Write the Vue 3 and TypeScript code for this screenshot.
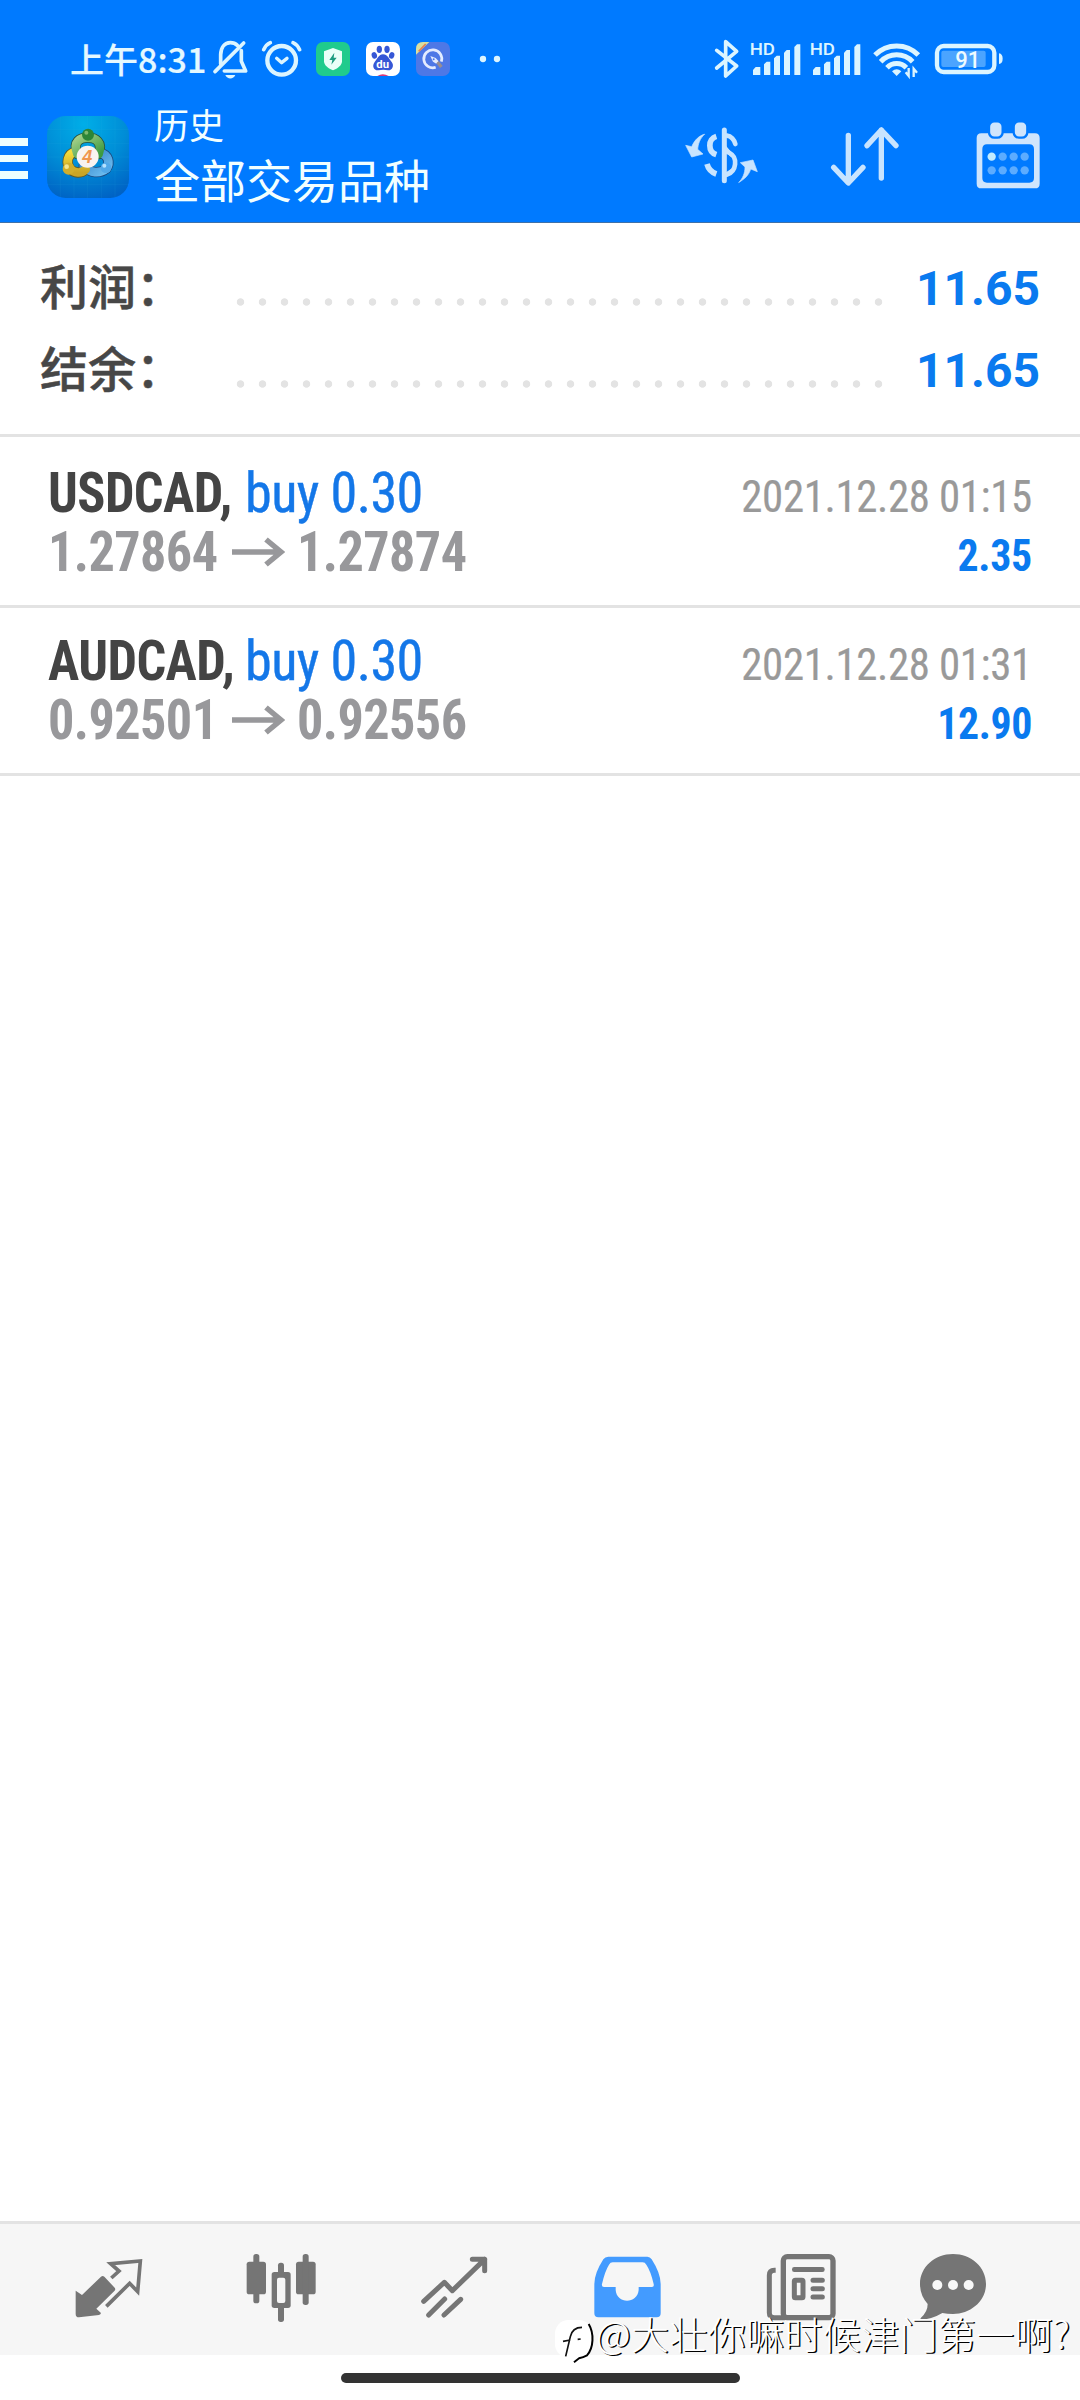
<script setup lang="ts">
interface Deal {
  symbol: string
  side: string
  open: string
  close: string
  time: string
  profit: string
}

const totals: { label: string; value: string }[] = [
  { label: '利润：', value: '11.65' },
  { label: '结余：', value: '11.65' },
]

const deals: Deal[] = [
  { symbol: 'USDCAD,', side: 'buy 0.30', open: '1.27864', close: '1.27874', time: '2021.12.28 01:15', profit: '2.35' },
  { symbol: 'AUDCAD,', side: 'buy 0.30', open: '0.92501', close: '0.92556', time: '2021.12.28 01:31', profit: '12.90' },
]

const signalBars: string[] = [
  'M250 165V150L258 141H272V165Z',
  'M283 165V133L291 125H302V165Z',
  'M313 165V115L321 107H331V165Z',
  'M343 165V98L351 90H361V165Z',
  'M374 165V81L382 73H392V165Z',
]
const calendarDots: number[] = [966, 999, 1032, 1065]
</script>

<template>
  <div class="screen">
    <header class="header">
      <div class="status">
        <div class="clock">上午8:31</div>
        <!-- muted, alarm and notification icons -->
        <svg class="status-left" viewBox="0 0 900 180" width="300" height="60">
          <g transform="translate(-630 0)" fill="none" stroke="#dcf5ff" stroke-width="11" stroke-linecap="round" stroke-linejoin="round">
            <path d="M662 132V104C663 82 674 68 691 68C700 68 707 71 712 76M724 92V124L737 153H673" />
            <path d="M645 155L731 69" />
            <path d="M676 165H706C701 179 681 179 676 165Z" fill="#dcf5ff" stroke="none" />
          </g>
          <g transform="translate(150 0)" fill="none" stroke="#dcf5ff" stroke-width="13" stroke-linecap="round" stroke-linejoin="round">
            <circle cx="65" cy="121" r="43" />
            <path d="M50 115L65 128L81 115" stroke-width="10" />
            <path d="M11 89Q18 74 31 68M99 68Q112 74 119 89" stroke-width="11" />
          </g>
          <g transform="translate(150 0)">
            <rect x="168" y="66" width="102" height="102" rx="21" fill="#20cb8d" />
            <path d="M219 84L246 94V124C246 136 233 146 219 151C205 146 192 136 192 124V94Z" fill="#e9fff8" />
            <path d="M223 98L208 120H217L214 134L230 113H221Z" fill="#1c9c80" />
            <rect x="318" y="66" width="102" height="102" rx="21" fill="#fff" />
            <g fill="#3657d6">
              <ellipse cx="358" cy="88" rx="8" ry="11" />
              <ellipse cx="381" cy="88" rx="8" ry="11" />
              <ellipse cx="343" cy="106" rx="8" ry="10" transform="rotate(-18 343 106)" />
              <ellipse cx="395" cy="106" rx="8" ry="10" transform="rotate(18 395 106)" />
              <path d="M369 103C383 103 387 118 395 126C404 137 396 152 384 151C374 149 366 149 355 151C341 152 335 138 344 126C352 118 356 103 369 103Z" />
            </g>
            <text x="368" y="144" font-size="34" font-weight="700" text-anchor="middle" fill="#fff" font-family="Roboto, sans-serif">du</text>
            <path d="M352 168Q368 158 386 168Z" fill="#d9367c" />
            <rect x="468" y="66" width="102" height="102" rx="21" fill="#4e78e6" />
            <path d="M468 104V87Q468 66 489 66H508Z" fill="#d9dfa0" />
            <path d="M476 94L497 72" stroke="#e98050" stroke-width="5" />
            <path d="M527 142A27 27 0 1 1 544 125" fill="none" stroke="#e4ecff" stroke-width="8" />
            <path d="M511 108L527 114L536 124L529 131L519 125Z" fill="#e4ecff" />
            <circle cx="521" cy="118" r="3" fill="#4e78e6" />
            <path d="M529 130L536 123L548 138L540 144Z" fill="#998e91" />
            <circle cx="669" cy="117" r="9.500" fill="#dcf5ff" />
            <circle cx="711" cy="117" r="9.500" fill="#dcf5ff" />
          </g>
        </svg>
        <!-- bluetooth, two SIM signals, wifi, battery -->
        <svg class="status-right" viewBox="130 0 870 180" width="290" height="60">
          <path d="M141 91L201 138L168 168V65L201 94L141 144" fill="none" stroke="#dcf5ff" stroke-width="11" stroke-linecap="round" stroke-linejoin="round" />
          <g v-for="n in 2" :key="n" :transform="`translate(${(n - 1) * 180} 0)`" fill="#dcf5ff">
            <text x="240" y="105" font-size="49" font-weight="500" textLength="76" lengthAdjust="spacingAndGlyphs" font-family="Roboto, sans-serif">HD</text>
            <path v-for="bar in signalBars" :key="bar" :d="bar" />
          </g>
          <g fill="none" stroke="#dcf5ff" stroke-width="15">
            <path d="M616 105A91 91 0 0 1 746 105" />
            <path d="M633 125A66 66 0 0 1 729 125" />
            <path d="M652 143A40 40 0 0 1 710 143" />
          </g>
          <path d="M667 154Q681 142 695 154L681 168Z" fill="#dcf5ff" />
          <path d="M708 157L717 168V144M742 158L732 146V171" fill="none" stroke="#dcf5ff" stroke-width="7" />
          <rect x="802" y="78" width="172" height="78" rx="20" fill="none" stroke="#dcf5ff" stroke-width="13" />
          <rect x="815" y="92" width="133" height="49" rx="6" fill="#4ba4ff" />
          <text x="857" y="144" font-size="70" font-weight="500" textLength="75" lengthAdjust="spacingAndGlyphs" fill="#effbff" font-family="Roboto, sans-serif">91</text>
          <path d="M988 100Q999 102 999 116Q999 130 988 132Z" fill="#dcf5ff" />
        </svg>
      </div>
      <div class="toolbar">
        <div class="menu"><i></i><i></i><i></i></div>
        <svg class="logo" viewBox="142 288 246 246" width="82" height="82">
          <defs>
            <radialGradient id="tile" cx="45%" cy="10%" r="95%">
              <stop offset="0" stop-color="#00aee8" />
              <stop offset="0.55" stop-color="#008cd6" />
              <stop offset="1" stop-color="#0062c4" />
            </radialGradient>
            <linearGradient id="green" x1="0" y1="0" x2="1" y2="1"><stop offset="0" stop-color="#a5d08a" /><stop offset="1" stop-color="#3c9a40" /></linearGradient>
            <linearGradient id="gold" x1="0" y1="0" x2="0" y2="1"><stop offset="0" stop-color="#f4dc3a" /><stop offset="1" stop-color="#c9a526" /></linearGradient>
            <linearGradient id="blue" x1="0" y1="0" x2="1" y2="1"><stop offset="0" stop-color="#2f7fc4" /><stop offset="1" stop-color="#6dbdf0" /></linearGradient>
          </defs>
          <rect x="142" y="288" width="246" height="246" rx="56" fill="url(#tile)" />
          <path d="M182 290V532M223 288V534M264 288V534M305 288V534M346 290V532M142 329H388M142 370H388M142 411H388M142 452H388M142 493H388" stroke="#31b5df" stroke-opacity=".15" stroke-width="2" />
          <g fill="none" stroke-linecap="round" stroke-linejoin="round">
            <g stroke="#28503e" stroke-width="31">
              <path d="M300 398C328 404 332 430 320 446C300 462 272 460 252 438" stroke="#1c4a80" />
              <path d="M226 396C202 402 199 430 211 446C224 460 245 462 258 448" stroke="#5f5a28" />
              <path d="M233 402C218 364 242 353 264 353C288 353 310 366 297 402" />
            </g>
            <g stroke-width="26">
              <path d="M300 398C328 404 332 430 320 446C300 462 272 460 252 438" stroke="url(#blue)" />
              <path d="M226 396C202 402 199 430 211 446C224 460 245 462 258 448" stroke="url(#gold)" />
              <path d="M233 402C218 364 242 353 264 353C288 353 310 366 297 402" stroke="url(#green)" />
            </g>
          </g>
          <circle cx="265" cy="344" r="18" fill="#2c8637" />
          <circle cx="207" cy="446" r="18" fill="#cfae2c" />
          <circle cx="319" cy="443" r="16" fill="#51a8e8" />
          <circle cx="260" cy="338" r="6" fill="#7fb96e" />
          <circle cx="201" cy="440" r="7" fill="#f4e690" />
          <circle cx="314" cy="437" r="6" fill="#b4e2ff" />
          <circle cx="264" cy="410" r="33" fill="#f8f3f0" />
          <text x="263" y="429" font-size="54" font-style="italic" font-weight="700" text-anchor="middle" fill="#f0964e" font-family="'Liberation Sans', sans-serif">4</text>
        </svg>
        <div class="titles">
          <div class="title">历史</div>
          <div class="subtitle">全部交易品种</div>
        </div>
        <svg class="tools" viewBox="40 300 1080 216" width="360" height="72" fill="none" stroke="#c8e4ff" stroke-linecap="round" stroke-linejoin="round">
          <!-- currency -->
          <g stroke-width="15">
            <path d="M164 330V482" />
            <path d="M140 349C114 357 114 395 140 404M112 432C116 447 126 457 140 462" stroke-linecap="butt" stroke-width="17" />
            <path d="M172 347C184 348 194 360 197 372M170 394L180 399C205 412 201 454 172 464" stroke-width="14" />
            <path d="M164 380L185 405M170 463L186 452" stroke-width="11" />
            <path d="M104 343C89 347 76 358 66 380L48 376L66 411L100 402L84 388C86 370 90 358 104 343Z" fill="#c8e4ff" stroke-width="2" />
            <path d="M208 487C223 478 238 466 243 447L263 455L250 420L212 428L226 441C226 460 219 475 208 487Z" fill="#c8e4ff" stroke-width="2" />
          </g>
          <!-- sort -->
          <path d="M536 346V488M492 442L536 489L580 442M635 474V330M592 377L635 330L679 377" stroke-width="16" />
          <!-- calendar -->
          <path d="M935 340H1096Q1110 340 1110 354V491Q1110 505 1096 505H935Q921 505 921 491V354Q921 340 935 340ZM952 373Q938 373 938 387V474Q938 488 952 488H1079Q1093 488 1093 474V387Q1093 373 1079 373Z" fill="#cfe5fc" fill-rule="evenodd" stroke="none" />
          <g fill="#cfe5fc" stroke="#007aff" stroke-width="7">
            <rect x="958" y="304" width="41" height="49" rx="16" />
            <rect x="1032" y="304" width="41" height="49" rx="16" />
          </g>
          <g stroke="none">
            <circle v-for="(x, i) in calendarDots" :key="x" :cx="x" cy="410" r="12.500" :fill="i ? '#5cacff' : '#c2ecff'" />
            <circle v-for="x in calendarDots" :key="x" :cx="x" cy="451" r="12.500" fill="#5cacff" />
          </g>
        </svg>
      </div>
    </header>

    <section class="totals">
      <div v-for="row in totals" :key="row.label" class="total">
        <span class="label">{{ row.label }}</span>
        <span class="leader"></span>
        <span class="amount">{{ row.value }}</span>
      </div>
    </section>

    <main class="deals">
      <article v-for="deal in deals" :key="deal.symbol" class="deal">
        <div class="line">
          <b class="symbol">{{ deal.symbol }}</b>
          <span class="side">{{ deal.side }}</span>
          <span class="time">{{ deal.time }}</span>
        </div>
        <div class="line">
          <b class="price">{{ deal.open }}</b>
          <svg class="arrow" width="53" height="30" viewBox="0 0 53 30" fill="none" stroke="#98989b" stroke-width="5.500"><path d="M0 15H49M34 2.500L49 15L34 27.500" /></svg>
          <b class="price">{{ deal.close }}</b>
          <b class="profit">{{ deal.profit }}</b>
        </div>
      </article>
    </main>

    <nav class="tabs">
      <svg viewBox="0 0 360 131" width="360" height="131">
        <g transform="translate(0 -24) scale(.333333)" fill="#757575">
          <path d="M227 272L246 285L303 230Q308 226 313 230L344 263Q348 268 343 273L289 326L303 339Q302 344 297 345L237 352Q227 352 227 342Z" />
          <path d="M334 234L357 213L332 191L421 183L413 275L389 250L319 319" fill="none" stroke="#757575" stroke-width="11" />
          <rect x="740" y="185" width="58" height="98" rx="8" />
          <rect x="760" y="162" width="18" height="148" rx="8" />
          <rect x="888" y="185" width="59" height="98" rx="8" />
          <rect x="908" y="162" width="18" height="153" rx="8" />
          <rect x="834" y="188" width="18" height="178" rx="8" />
          <rect x="815" y="216" width="57" height="108" rx="8" />
          <rect x="831" y="233" width="25" height="76" rx="6" fill="#f6f6f6" />
        </g>
      </svg>
      <svg viewBox="0 0 360 131" width="360" height="131">
        <g transform="translate(0 -24) scale(.333333)">
          <path d="M191 304L253 247L277 272L374 178M337 178H374V212M206 345L254 297M252 345L302 298" fill="none" stroke="#757575" stroke-width="15" stroke-linecap="round" stroke-linejoin="round" />
          <path d="M745 170H862Q870 170 875 178Q902 220 902 252V340Q902 352 890 352H715Q703 352 703 340V252Q703 220 730 178Q735 170 745 170ZM758 187Q751 187 747 194Q735 213 726 252Q724 261 732 261H767V270C770 313 832 313 836 270V261H876Q883 261 881 252Q872 213 859 194Q855 187 848 187Z" fill="#439bff" fill-rule="evenodd" />
        </g>
      </svg>
      <svg viewBox="0 0 360 131" width="360" height="131">
        <g transform="translate(0 -24) scale(.333333)">
          <rect x="190" y="170" width="149" height="183" rx="12" fill="none" stroke="#757575" stroke-width="16" />
          <path d="M167 211H163Q148 211 148 226V338Q148 353 163 353H195" fill="none" stroke="#757575" stroke-width="15" />
          <rect x="216" y="201" width="98" height="15" rx="7" fill="#757575" />
          <rect x="223" y="241" width="26" height="52" rx="3" fill="none" stroke="#757575" stroke-width="15" />
          <path d="M279 241H307M279 266H307M279 291H307" stroke="#757575" stroke-width="15" stroke-linecap="round" />
          <path d="M699 162C754 162 798 201 798 252C798 304 751 342 699 342Q682 342 667 339Q637 357 604 359Q599 358 603 353Q623 335 623 312Q600 286 600 252C600 201 644 162 699 162Z" fill="#757575" />
          <g fill="#f8f8f8"><circle cx="652" cy="255" r="15" /><circle cx="699" cy="255" r="15" /><circle cx="746" cy="255" r="15" /></g>
        </g>
      </svg>
      <div class="watermark">
        <svg width="42" height="46" viewBox="582 354 126 138">
          <rect x="585" y="360" width="112" height="113" rx="40" fill="#fff" />
          <path d="M617 469L631 410Q637 382 666 382M609 424L631 420M653 418L662 417" fill="none" stroke="#111" stroke-width="5" />
          <path d="M686 372C703 400 701 444 681 466Q670 472 657 475L642 487" fill="none" stroke="#000" stroke-width="6" />
        </svg>
        <span>@大壮你嘛时候津门第一啊?</span>
      </div>
    </nav>
    <footer class="gesture"><i></i></footer>
  </div>
</template>

<style>
body {
  background: #fff;
}
</style>

<style scoped>
.screen {
  width: 1080px;
  height: 2400px;
  display: flex;
  flex-direction: column;
  overflow: hidden;
  background: #fff;
  font-family: Roboto, 'Noto Sans CJK SC', sans-serif;
}
.header {
  height: 222px;
  flex: none;
  background: #007aff;
  border-bottom: 1px solid #3f71a8;
}
.status {
  height: 80px;
  display: flex;
  align-items: flex-start;
  padding-top: 20px;
  box-sizing: border-box;
}
.clock {
  width: 140px;
  margin-left: 70px;
  color: #e4f8ff;
  font: 500 34px/78px 'Noto Sans CJK SC', sans-serif;
  -webkit-text-stroke: 0.2px #e4f8ff;
  height: 60px;
  white-space: nowrap;
}
.status-right {
  margin-left: 203px;
}
.status svg {
  flex: none;
}
.toolbar {
  height: 142px;
  display: flex;
  align-items: flex-start;
}
.menu {
  width: 28px;
  padding-top: 58px;
  display: flex;
  flex-direction: column;
  gap: 9px;
}
.menu i {
  height: 7.700px;
  background: #ecffff;
}
.logo {
  margin: 36px 0 0 19px;
  flex: none;
}
.titles {
  margin-left: 25px;
  width: 529px;
  color: #f2ffff;
  font-family: 'Noto Sans CJK SC', sans-serif;
}
.title {
  margin-top: 19px;
  font-size: 35px;
  line-height: 50px;
}
.subtitle {
  font-size: 46px;
  line-height: 59px;
}
.tools {
  margin-top: 40px;
  flex: none;
}
.totals {
  height: 214px;
  flex: none;
  box-sizing: border-box;
  padding: 20px 40px 0;
  border-bottom: 3px solid #e3e3e3;
}
.total {
  height: 82px;
  display: flex;
  align-items: center;
}
.label {
  width: 189px;
  font: 500 48px/82px 'Noto Sans CJK SC', sans-serif;
  -webkit-text-stroke: 0.5px #474747;
  color: #474747;
}
.leader {
  width: 660px;
  height: 22px;
  margin-top: 35px;
  background: radial-gradient(circle at 11.500px 11px, #e3e3e3 3.300px, transparent 4.100px) 0 0 / 22px 22px;
}
.amount {
  flex: 1;
  margin-top: 9px;
  text-align: right;
  font-size: 48px;
  font-weight: 700;
  color: #0a7aef;
}
.deals {
  padding-top: 3px;
}
.deal {
  height: 168px;
  box-sizing: border-box;
  border-bottom: 3px solid #e3e3e3;
  padding: 24px 48px 0;
}
.line {
  display: flex;
  align-items: baseline;
  height: 59px;
  line-height: 59px;
  font-family: 'Roboto Condensed', Roboto, sans-serif;
  font-stretch: 75%;
  font-size: 55px;
  letter-spacing: -0.6px;
  white-space: nowrap;
}
.symbol,
.side,
.price {
  transform-origin: 0 50%;
}
.symbol {
  width: 197px;
  color: #444;
  transform: scaleX(0.95);
}
.side {
  width: 200px;
  color: #1477e8;
  -webkit-text-stroke: 0.4px #1477e8;
  transform: scaleX(0.985);
}
.price {
  width: 184px;
  color: #98989b;
  transform: scaleX(0.949);
}
.arrow {
  flex: none;
  align-self: flex-start;
  margin: 14px 12px 0 0;
}
.time,
.profit {
  margin-left: auto;
  font-size: 45px;
  letter-spacing: -0.4px;
  transform-origin: 100% 50%;
}
.time {
  color: #999;
  -webkit-text-stroke: 0.2px #999;
  transform: scaleX(0.953);
}
.profit {
  color: #0a7aef;
  transform: scaleX(0.93);
}
.tabs {
  margin-top: auto;
  position: relative;
  display: flex;
  height: 131px;
  flex: none;
  background: #f6f6f6;
  border-top: 3px solid #e3e3e3;
}
.watermark {
  position: absolute;
  left: 554px;
  top: 94px;
  display: flex;
  color: #fff;
  font: 300 38px/46px 'Noto Sans CJK SC', sans-serif;
  letter-spacing: 0.35px;
  text-shadow: 1.500px 1px 0 #000;
  white-space: nowrap;
}
.watermark span {
  margin-top: -8px;
}
.gesture {
  height: 45px;
  flex: none;
  display: flex;
  justify-content: center;
}
.gesture i {
  margin-top: 18px;
  width: 399px;
  height: 10px;
  border-radius: 5px;
  background: #333;
}
</style>
